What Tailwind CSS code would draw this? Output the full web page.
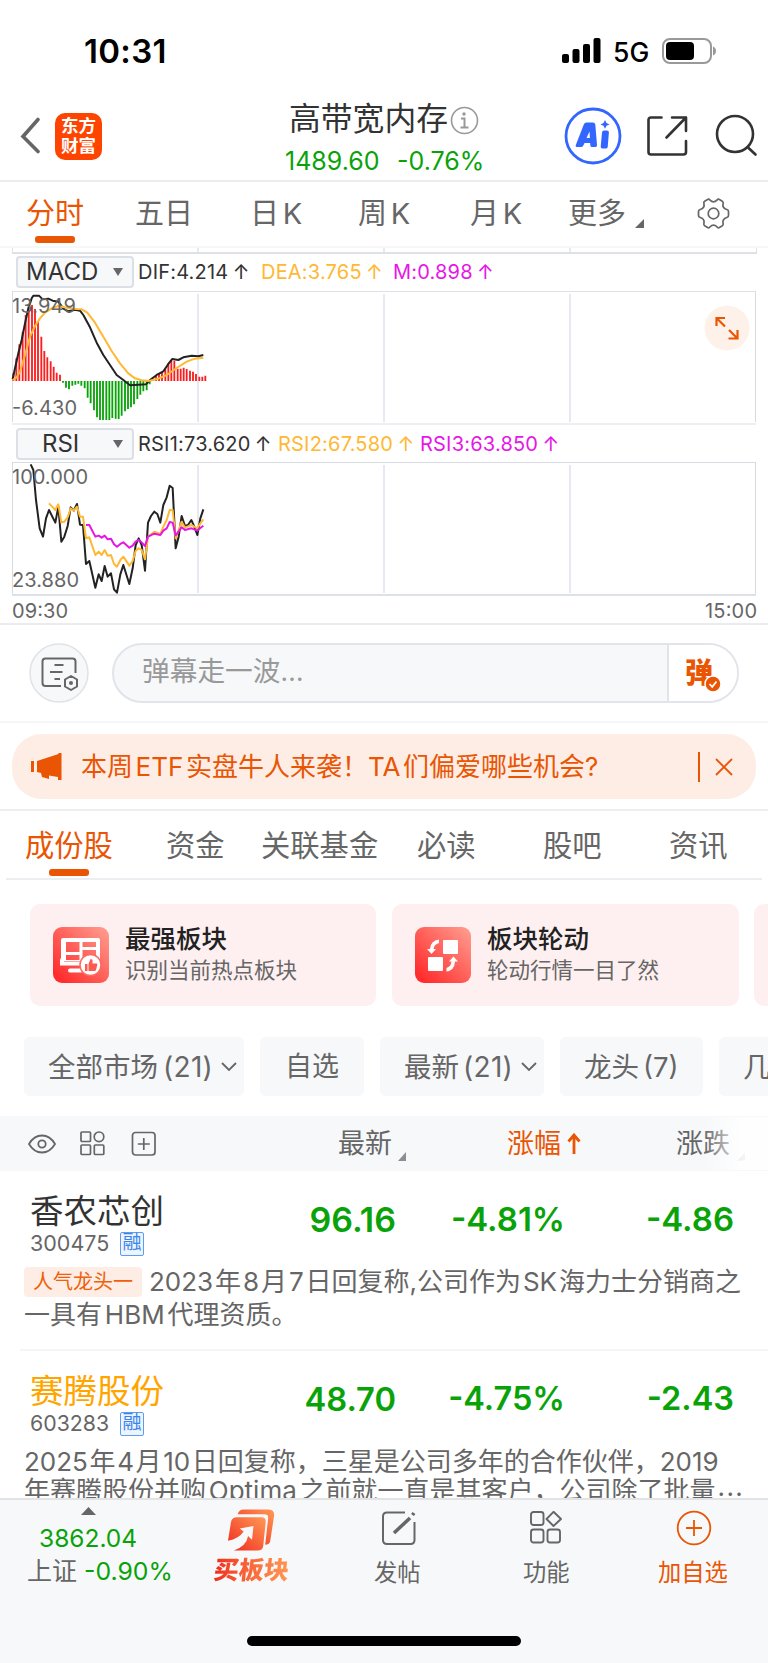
<!DOCTYPE html>
<html lang="zh-CN">
<head>
<meta charset="utf-8">
<title>高带宽内存</title>
<script src="https://cdn.jsdelivr.net/npm/@tailwindcss/browser@4"></script>
</head>
<body class="bg-white">
<div class="w-[768px] h-[1663px] overflow-hidden flex flex-col bg-white text-[#666] leading-none whitespace-nowrap font-[Inter,'Noto_Sans_CJK_SC',sans-serif]">

  <!-- status bar -->
  <div class="h-[102px] shrink-0 flex items-center text-black">
    <div class="ml-[84px] w-[478px] text-[33px] font-semibold tracking-[0.3px]">10:31</div>
    <svg width="39" height="26" viewBox="0 0 39 26"><rect x="0" y="16" width="7" height="9" rx="2"/><rect x="10.5" y="11" width="7" height="14" rx="2"/><rect x="21" y="6" width="7" height="19" rx="2"/><rect x="31.500" y="0" width="7" height="25" rx="2"/></svg>
    <div class="ml-[12px] mt-[2px] w-[49px] text-[26.500px] font-medium">5G</div>
    <svg width="56" height="26" viewBox="0 0 56 26"><rect x="1" y="1" width="48" height="24" rx="7" fill="none" stroke="#999" stroke-width="2"/><rect x="4" y="4" width="28" height="18" rx="4"/><path d="M51 8.500c4 1.500 4 7.500 0 9z" fill="#999"/></svg>
  </div>

  <!-- title bar -->
  <header class="h-[80px] shrink-0 flex items-center pb-[10px] border-b-2 border-[#ececec]">
    <svg class="ml-[19px]" width="22" height="38" viewBox="0 0 22 38"><path d="M19 3L4 20L19 35" transform="translate(0 -.5)" fill="none" stroke="#666" stroke-width="3.600" stroke-linecap="round"/></svg>
    <div class="ml-[14px] size-[47px] rounded-[10px] bg-[#ff4400] text-white text-[17.500px] font-bold leading-[20px] text-center flex flex-col justify-center"><span>东方</span><span>财富</span></div>
    <div class="ml-[183px] mt-[7px] w-[200px] flex flex-col gap-[7px]">
      <div class="h-[36px] ml-[4px] flex items-center text-[31.800px] text-[#333] leading-[36px]">高带宽内存<svg class="ml-[2px] mt-[2px]" width="29" height="29" viewBox="0 0 29 29"><circle cx="14.500" cy="14.500" r="13" fill="none" stroke="#999" stroke-width="1.600"/><circle cx="14" cy="8" r="1.700" fill="#999"/><path d="M11 12.500h3.500v9M10.500 21.500h8" fill="none" stroke="#999" stroke-width="2"/></svg></div>
      <div class="h-[34px] flex items-center text-[25px] text-[#09a309]"><span class="w-[112px]">1489.60</span><span>-0.76%</span></div>
    </div>
    <svg class="ml-[79px]" width="58" height="58" viewBox="0 0 58 58" fill="#3366ff"><circle cx="29" cy="29" r="27" fill="none" stroke="#3366ff" stroke-width="2.800"/><path fill-rule="evenodd" d="M20 17q.8-1.500 2.300-1.500h6.700q2 0 2.300 2l1.700 20.500q.2 2-1.500 2h-3.500q-1.500 0-1.600-1.500l-.3-2.500h-5.500l-1.300 2.500q-.7 1.500-2.200 1.500h-3.800q-2.200 0-1.500-2zM22.500 31h3.400l-.4-6.500z"/><path d="M38 25.500q.2-2 2-2h3q2 0 1.900 2l-1.200 14.500q-.2 1.500-1.800 1.500h-3.500q-1.800 0-1.700-1.800zM41 13l1.500 3 3 1.400-3 1.400L41 21.800l-1.500-3-3-1.400 3-1.400z"/></svg>
    <svg class="ml-[24px]" width="42" height="42" viewBox="0 0 42 42" fill="none" stroke="#333" stroke-width="2.600" stroke-linecap="round" stroke-linejoin="round"><path d="M15.500 2.500H5Q2.500 2.500 2.500 5V37Q2.500 39.500 5 39.500H37.500Q40 39.500 40 37V26M26 2.500H40V16M40 2.500L20.500 22.500"/></svg>
    <svg class="ml-[26px]" width="44" height="44" viewBox="0 0 44 44" fill="none" stroke="#333" stroke-width="2.600" stroke-linecap="round"><circle cx="21" cy="20" r="18"/><path d="M34 33.500L41.500 40.500"/></svg>
  </header>

  <!-- period tabs -->
  <nav class="h-[66px] shrink-0 flex text-[29px] [word-spacing:-4.5px] border-b-2 border-[#f7f7f7]">
    <div class="ml-[26px] w-[109px] flex flex-col text-[#ea5504]"><span class="h-[54px] leading-[63px]">分时</span><span class="ml-[9px] w-[40px] h-[7px] rounded-[3px] bg-[#ea5504]"></span></div>
    <span class="w-[115px] leading-[63px]">五日</span>
    <span class="w-[108px] leading-[63px]">日 K</span>
    <span class="w-[112px] leading-[63px]">周 K</span>
    <span class="w-[98px] leading-[63px]">月 K</span>
    <span class="w-[67px] leading-[63px]">更多</span>
    <svg class="mt-[37px]" width="10" height="10" viewBox="0 0 10 10"><path d="M9 0V9H0z" fill="#666"/></svg>
    <svg class="ml-[52px] mt-[15px]" width="33" height="33" viewBox="-16.500 -16.500 33 33" fill="none" stroke="#666" stroke-width="1.700" stroke-linejoin="round"><circle r="5.300"/><path d="M-5.500 -14.200Q-4.200 -14.600 -3.500 -13.300Q0 -9.800 3.500 -13.300Q4.200 -14.600 5.500 -14.200L8.800 -12.300Q10 -11.500 9.600 -10Q8.500 -5.500 13.300 -4Q15 -3.500 15 -2V2Q15 3.500 13.300 4Q8.500 5.500 9.600 10Q10 11.500 8.800 12.300L5.500 14.200Q4.200 14.600 3.500 13.300Q0 9.800 -3.500 13.300Q-4.200 14.600 -5.500 14.200L-8.800 12.300Q-10 11.500 -9.600 10Q-8.500 5.500 -13.300 4Q-15 3.500 -15 2V-2Q-15 -3.500 -13.300 -4Q-8.500 -5.500 -9.600 -10Q-10 -11.500 -8.800 -12.300Z"/></svg>
  </nav>

  <!-- bottom edge of the scrolled price chart -->
  <div class="mx-[12px] h-[6px] w-[745px] shrink-0 border-b-2 border-x border-[#dfe1e8] flex"><i class="w-[186px] border-r-2 border-[#e6e9f0]"></i><i class="w-[186px] border-r-2 border-[#e6e9f0]"></i><i class="w-[186px] border-r-2 border-[#e6e9f0]"></i></div>

  <!-- MACD -->
  <div class="h-[37px] shrink-0 flex items-center pb-[2px] text-[20px]">
    <div class="ml-[16px] w-[118px] h-[32px] rounded-[4px] border-2 border-[#dcdfe6] bg-[#f7f8fa] flex items-center text-[24px] text-[#333]"><span class="ml-[8px] w-[87px]">MACD</span><svg width="10" height="8" viewBox="0 0 10 8"><path d="M0 0H10L5 8z" fill="#666"/></svg></div>
    <span class="ml-[4px] w-[123px] text-[#333] tracking-[0.2px] [word-spacing:-1.500px]">DIF:4.214 ↑</span>
    <span class="w-[132px] text-[#ffb833] tracking-[0.2px] [word-spacing:-1.500px]">DEA:3.765 ↑</span>
    <span class="text-[#e617e6] tracking-[0.2px] [word-spacing:-1.500px]">M:0.898 ↑</span>
  </div>
  <div class="relative h-[134px] shrink-0">
    <svg class="block" width="768" height="134" viewBox="0 291 768 134">
      <path d="M12 291.500H756" stroke="#dfe1e8" stroke-width="1"/><path d="M12.500 291V422M755.500 291V422" stroke="#d8dbe2"/><path d="M198 294V422M384 294V422M570 294V422" stroke="#e6e9f2" stroke-width="2"/><path d="M12 424H756" stroke="#eeeff2" stroke-width="2"/>
      <g transform="translate(0 240) scale(.33333)" fill="none">
        <path stroke="#fa1e1e" stroke-width="5.500" d="M40 423V400M49 423V355M58 423V313M68 423V275M77 423V225M86 423V205M96 423V195M105 423V207M114 423V245M124 423V290M133 423V333M142 423V352M152 423V364M161 423V380M170 423V398M180 423V404M458 423V415M468 423V405M477 423V400M486 423V396M496 423V388M505 423V370M514 423V362M523 423V362M533 423V386M542 423V386M551 423V383M560 423V387M570 423V392M579 423V395M588 423V402M598 423V410M607 423V410M616 423V407"/>
        <path stroke="#09a309" stroke-width="5.500" d="M189 423V428M198 423V443M207 423V448M217 423V437M226 423V434M235 423V431M244 423V437M254 423V445M263 423V473M272 423V490M282 423V511M291 423V532M300 423V540M309 423V540M319 423V540M328 423V540M337 423V534M347 423V536M356 423V537M365 423V527M375 423V514M384 423V507M393 423V502M402 423V493M412 423V477M421 423V464M430 423V454M440 423V451M449 423V433"/>
        <path stroke="#222" stroke-width="6" stroke-linejoin="round" d="M38 418L45 385L55 340L65 300L75 250L85 205L95 175L100 167L117 167L128 178L145 176L158 182L175 185L190 206L205 214L225 209L240 212L250 225L270 262L290 308L310 345L330 375L350 405L370 420L390 436L415 434L438 433L450 420L470 405L490 394L505 372L517 357L535 360L550 352L575 347L595 349L610 345"/>
        <path stroke="#ffb833" stroke-width="6" stroke-linejoin="round" d="M38 420L50 412L60 395L75 345L90 290L105 258L120 235L135 218L155 205L175 198L200 203L230 207L245 208L262 218L285 248L310 290L335 333L360 370L385 400L405 415L425 421L445 423L475 416L500 405L530 384L560 365L585 356L610 353"/>
      </g>
      <g font-size="20" fill="#666"><text x="12" y="312.500" textLength="64">13.949</text><text x="12" y="415" textLength="65">-6.430</text></g>
    </svg>
    <svg class="absolute left-[704px] top-[14px]" width="46" height="46" viewBox="0 0 46 46"><circle cx="23" cy="23" r="22.500" fill="#fef1ea"/><path d="M12.500 21V13H21M13 13.500L21 21.500M33.500 25V33.500H24.500M33 33L25 25" fill="none" stroke="#ea5504" stroke-width="2.200"/></svg>
  </div>

  <!-- RSI -->
  <div class="h-[37px] shrink-0 flex items-center text-[20px]">
    <div class="ml-[16px] w-[118px] h-[32px] rounded-[4px] border-2 border-[#dcdfe6] bg-[#f7f8fa] flex items-center text-[24px] text-[#333]"><span class="ml-[24px] w-[71px]">RSI</span><svg width="10" height="8" viewBox="0 0 10 8"><path d="M0 0H10L5 8z" fill="#666"/></svg></div>
    <span class="ml-[4px] w-[140px] text-[#333] tracking-[0.2px] [word-spacing:-1.500px]">RSI1:73.620 ↑</span>
    <span class="w-[142px] text-[#ffb833] tracking-[0.2px] [word-spacing:-1.500px]">RSI2:67.580 ↑</span>
    <span class="text-[#e617e6] tracking-[0.2px] [word-spacing:-1.500px]">RSI3:63.850 ↑</span>
  </div>
  <svg class="block shrink-0" width="768" height="161" viewBox="0 462 768 161">
    <path d="M12 462.500H756" stroke="#d8dbe2" stroke-width="1"/><path d="M12.500 462V594M755.500 462V594" stroke="#d8dbe2"/><path d="M198 465V593M384 465V593M570 465V593" stroke="#e6e9f2" stroke-width="2"/><path d="M12 595H756" stroke="#dfe1e8" stroke-width="2"/>
    <g transform="translate(0 420) scale(.33333)" fill="none" stroke-width="6" stroke-linejoin="round">
      <path stroke="#222" d="M92 133L100 150L108 240L119 325L129 350L138 295L147 270L166 308L175 260L184 365L193 350L203 318L212 262L221 272L231 252L240 314L249 315L258 432L268 423L286 503L296 463L305 483L314 438L323 470L333 460L342 508L351 518L361 463L370 435L388 492L398 445L407 375L416 355L425 375L435 452L444 308L453 288L463 275L472 282L481 308L490 255L500 232L509 197L518 204L527 385L536 350L545 288L555 318L564 315L574 300L583 320L592 345L601 295L610 268"/>
      <path stroke="#ffb833" d="M147 250L166 270L175 253L184 307L193 305L203 292L212 265L221 272L231 260L240 290L249 290L258 355L268 352L286 405L296 395L305 405L314 390L323 407L333 405L342 432L351 440L361 420L370 410L388 437L398 423L407 392L416 385L425 390L435 418L444 350L463 335L481 342L490 320L500 300L509 270L518 270L527 355L545 305L555 323L574 315L592 325L601 310L610 298"/>
      <path stroke="#e617e6" d="M258 315L268 315L286 350L296 347L305 353L314 347L323 358L333 356L342 373L351 380L361 372L370 367L388 383L398 377L407 365L416 360L425 367L435 378L444 350L463 341L481 345L490 332L500 325L509 306L518 308L527 346L545 322L555 330L574 325L592 332L601 324L610 317"/>
    </g>
    <g font-size="20" fill="#666"><text x="12" y="484" textLength="76">100.000</text><text x="12" y="586.500" textLength="67">23.880</text><text x="12" y="617.500" textLength="56">09:30</text><text x="705" y="617.500" textLength="52">15:00</text></g>
  </svg>

  <!-- comment input -->
  <div class="h-[100px] shrink-0 flex items-center border-y-2 border-[#eaecef] border-b-[#f6f6f6]">
    <svg class="ml-[29px]" width="60" height="60" viewBox="0 0 60 60" fill="none" stroke="#666" stroke-width="2"><circle cx="30" cy="30" r="29" fill="#f7f8fa" stroke="#dfe2e8" stroke-width="1.500"/><path d="M32 43H16.500Q13.500 43 13.500 40V18.500Q13.500 15.500 16.500 15.500H43.500Q46.500 15.500 46.500 18.500V30M25.500 22H34.500M21 29H33.500M25.500 36H31"/><path d="M42 33L48 36.500V43.500L42 47L36 43.500V36.500Z" stroke-linejoin="round"/><circle cx="42" cy="40" r="2" fill="#666" stroke="none"/></svg>
    <div class="ml-[23px] w-[627px] h-[60px] rounded-full border-2 border-[#e1e4ea] bg-[#f7f8fa] overflow-hidden flex">
      <div class="w-[553px] pl-[28px] leading-[52px] text-[27.700px] text-[#999]">弹幕走一波<span class="text-[26px] tracking-[0.300px]">...</span></div>
      <div class="flex-1 bg-white border-l-2 border-[#e1e4ea] flex items-center">
        <span class="ml-[16px] text-[28px] font-black text-[#ea5504]">弹</span>
        <svg class="-ml-[9px] mt-[22px]" width="18" height="18" viewBox="0 0 18 18"><circle cx="9" cy="9" r="8" fill="#ea5504" stroke="#fff" stroke-width="1.500"/><path d="M5.500 9L8.200 11.800L12.500 6.500" fill="none" stroke="#fff" stroke-width="1.800"/></svg>
      </div>
    </div>
  </div>

  <!-- announcement -->
  <div class="h-[88px] shrink-0 px-[12px] pt-[11px] border-b-2 border-[#eceef2]">
    <div class="w-[744px] h-[65px] rounded-[30px] bg-[#fdede5] flex items-center text-[#ea5504]">
      <svg class="ml-[19px]" width="31" height="27" viewBox="0 0 31 27" fill="#ea5504"><path d="M0 8h3v11H0zM6 8L27.500 1V0H30.500V27H27V24L18 22.500V26L11 24L10 20L6 19z"/></svg>
      <div class="ml-[19px] w-[617px] text-[26px] [word-spacing:-4.700px]">本周 ETF 实盘牛人来袭！TA 们偏爱哪些机会?</div>
      <i class="w-[1.500px] h-[30px] bg-[#ea5504]"></i>
      <svg class="ml-[15px]" width="18" height="18" viewBox="0 0 18 18"><path d="M1 1L17 17M17 1L1 17" stroke="#ea5504" stroke-width="1.800"/></svg>
    </div>
  </div>

  <!-- section tabs -->
  <nav class="mx-[6px] h-[69px] shrink-0 flex text-[29.300px] leading-[70px] border-b-2 border-[#eceef2]">
    <div class="ml-[19px] w-[141px] flex flex-col text-[#ea5504]"><span class="h-[58px]">成份股</span><span class="ml-[24px] w-[40px] h-[7px] rounded-[3px] bg-[#ea5504]"></span></div>
    <span class="w-[95px]">资金</span><span class="w-[156px]">关联基金</span><span class="w-[126px]">必读</span><span class="w-[126px]">股吧</span><span>资讯</span>
  </nav>

  <!-- feature cards -->
  <div class="h-[157px] shrink-0 pl-[30px] pt-[24px] flex gap-[16px]">
    <div class="w-[346px] h-[102px] shrink-0 rounded-[10px] bg-[#fef0f0] flex items-center pl-[23px] gap-[16px]">
      <svg width="56" height="56" viewBox="0 0 56 56"><defs><linearGradient id="r" x1="0" y1="1" x2="1" y2="0"><stop offset="0.100" stop-color="#ff2d2d"/><stop offset="1" stop-color="#ffa092"/></linearGradient></defs><rect width="56" height="56" rx="9" fill="url(#r)"/><path fill="#fff" fill-rule="evenodd" d="M10 11H45Q47 11 47 13V34H10Q8 34 8 36V13Q8 11 10 11ZM13 15V25H26.500V15ZM29.500 15V20H43V15ZM29.500 23V32H43V23ZM13 28V33H26.500V28Z"/><path d="M9 33V36.500H30M17 43.500H28" stroke="#fff" stroke-width="4" stroke-linecap="round" fill="none"/><circle cx="37.500" cy="38" r="10.500" fill="#fff" stroke="#ff6a60" stroke-width="1.500"/><path fill="#ff5a50" d="M32 37h2.500v7H32zM35.500 37l2-5q2.500 0 2 3v1.500h4q1 0 .8 1.200L43 43q-.3 1-1.300 1h-6.200z"/></svg>
      <div class="flex flex-col -mt-[3px]"><span class="text-[25.500px] leading-[33px] font-medium text-[#222]">最强板块</span><span class="text-[21.500px] leading-[30px]">识别当前热点板块</span></div>
    </div>
    <div class="w-[347px] h-[102px] shrink-0 rounded-[10px] bg-[#fef0f0] flex items-center pl-[23px] gap-[16px]">
      <svg width="56" height="56" viewBox="0 0 56 56" fill="#fff"><rect width="56" height="56" rx="9" fill="url(#r)"/><rect x="28" y="13" width="15" height="14" rx="1"/><rect x="13" y="30" width="15" height="14" rx="1"/><path d="M24 12.500v3.500q-5 1.500-5.500 6h2.500l-4.500 5L12 22h3q.5-8.500 9-9.500zM31.500 44.500v-3.500q4.500-1.500 5-6.500h-2.500l4.500-5 4.500 5h-3q-.5 9-8.500 10z"/></svg>
      <div class="flex flex-col -mt-[3px]"><span class="text-[25.500px] leading-[33px] font-medium text-[#222]">板块轮动</span><span class="text-[21.500px] leading-[30px]">轮动行情一目了然</span></div>
    </div>
    <div class="w-[346px] h-[102px] shrink-0 -ml-[1px] rounded-[10px] bg-[#fef0f0]"></div>
  </div>

  <!-- filter chips -->
  <div class="h-[79px] shrink-0 pl-[24px] flex gap-[16px] text-[27.500px] leading-[60px]">
    <div class="w-[220px] h-[59px] shrink-0 rounded-[6px] bg-[#f7f8fa] pl-[24px] flex items-center"><span class="w-[173px]">全部市场<span class="ml-[5px] text-[28px] tracking-[0.300px]">(21)</span></span><svg width="16" height="10" viewBox="0 0 16 10"><path d="M1 1L8 8L15 1" fill="none" stroke="#666" stroke-width="1.800"/></svg></div>
    <div class="w-[104px] h-[59px] shrink-0 rounded-[6px] bg-[#f7f8fa] pl-[25px] text-[27px]">自选</div>
    <div class="w-[164px] h-[59px] shrink-0 rounded-[6px] bg-[#f7f8fa] pl-[24px] flex items-center"><span class="w-[117px]">最新<span class="ml-[4px] text-[28px] tracking-[0.300px]">(21)</span></span><svg width="16" height="10" viewBox="0 0 16 10"><path d="M1 1L8 8L15 1" fill="none" stroke="#666" stroke-width="1.800"/></svg></div>
    <div class="w-[143px] h-[59px] shrink-0 rounded-[6px] bg-[#f7f8fa] pl-[24px]">龙头<span class="ml-[4px] text-[27.500px]">(7)</span></div>
    <div class="w-[120px] h-[59px] shrink-0 rounded-[6px] bg-[#f7f8fa] pl-[24px]">几</div>
  </div>

  <!-- table head -->
  <div class="relative h-[55px] shrink-0 flex items-center bg-[#f7f8fa] text-[27px]">
    <svg class="ml-[28px]" width="28" height="20" viewBox="0 0 28 20" fill="none" stroke="#666" stroke-width="1.800"><path d="M1 10Q6 1.500 14 1.500T27 10Q22 18.500 14 18.500T1 10Z"/><circle cx="14" cy="10" r="3.700"/></svg>
    <svg class="ml-[24px]" width="25" height="25" viewBox="0 0 25 25" fill="none" stroke="#666" stroke-width="1.700"><rect x="1" y="1" width="9.500" height="9.500" rx="1"/><circle cx="19" cy="5.800" r="4.800"/><rect x="1" y="14" width="9.500" height="9.500" rx="1"/><rect x="14.300" y="14" width="9.500" height="9.500" rx="1"/></svg>
    <svg class="ml-[26px]" width="26" height="26" viewBox="0 0 26 26" fill="none" stroke="#666" stroke-width="1.700"><rect x="1.500" y="1.500" width="22.500" height="22.500" rx="3"/><path d="M12.800 7V19M6.800 13H18.800"/></svg>
    <span class="ml-[181px] w-[60px]">最新</span><svg class="mt-[26px]" width="8" height="9" viewBox="0 0 8 9"><path d="M8 0V9H0z" fill="#8a8d93"/></svg>
    <span class="ml-[101px] w-[60px] text-[#ea5504]">涨幅</span><svg width="14" height="22" viewBox="0 0 14 22"><path d="M7 21V3M1.500 8.500L7 2L12.500 8.500" fill="none" stroke="#ea5504" stroke-width="2.800"/></svg>
    <span class="ml-[95px] w-[62px]">涨跌</span><svg class="mt-[26px]" width="7" height="9" viewBox="0 0 8 9"><path d="M8 0V9H0z" fill="#8a8d93"/></svg>
    <div class="absolute right-0 top-[1px] h-[53px] w-[64px] bg-linear-to-r from-white/0 to-white/90 to-60%"></div>
  </div>

  <!-- stock rows: the list runs under the bottom bar -->
  <div class="h-[327px] shrink-0 overflow-hidden">
    <div class="h-[180px] ml-[20px] border-b-2 border-[#f5f5f5]">
      <div class="h-[92px] flex items-center">
        <div class="ml-[10px] w-[250px] flex flex-col pt-[12px]"><span class="text-[33.500px] leading-[42px] text-[#333]">香农芯创</span><span class="flex items-center h-[24px] text-[21.500px]"><span class="w-[90px]">300475</span><span class="size-[24px] border-[1.500px] border-[#5c9df0] rounded-[2px] bg-[#edf4fe] text-[#3a85e8] text-[19px] leading-[20px] text-center">融</span></span></div>
        <div class="pt-[5px] w-[116px] text-right text-[34px] font-semibold text-[#09a309]">96.16</div><div class="pt-[5px] w-[169px] text-right text-[33px] font-semibold text-[#09a309]">-4.81%</div><div class="pt-[5px] w-[169px] text-right text-[33px] font-semibold text-[#09a309]">-4.86</div>
      </div>
      <div class="ml-[4px] h-[38px] flex items-center text-[26px]"><span class="w-[118px] h-[30px] shrink-0 rounded-[4px] bg-[#fdede5] text-[#f0600a] text-[20px] leading-[30px] text-center">人气龙头一</span><span class="ml-[7px] [word-spacing:-5.400px]">2023 年 8 月 7 日回复称,公司作为 SK 海力士分销商之</span></div>
      <div class="ml-[4px] h-[27px] flex items-center text-[26px] [word-spacing:-4.500px]">一具有 HBM 代理资质。</div>
    </div>
    <div class="ml-[20px]">
      <div class="h-[92px] flex items-center">
        <div class="ml-[10px] w-[250px] flex flex-col pt-[12px]"><span class="text-[33.500px] leading-[42px] text-[#ffa500]">赛腾股份</span><span class="flex items-center h-[24px] text-[21.300px]"><span class="w-[90px]">603283</span><span class="size-[24px] border-[1.500px] border-[#5c9df0] rounded-[2px] bg-[#edf4fe] text-[#3a85e8] text-[19px] leading-[20px] text-center">融</span></span></div>
        <div class="pt-[5px] w-[116px] text-right text-[32.700px] font-semibold text-[#09a309]">48.70</div><div class="pt-[5px] w-[169px] text-right text-[32.500px] font-semibold text-[#09a309]">-4.75%</div><div class="pt-[5px] w-[169px] text-right text-[32.500px] font-semibold text-[#09a309]">-2.43</div>
      </div>
      <div class="ml-[4px] h-[37px] flex items-center text-[26px] [word-spacing:-5.700px]">2025 年 4 月 10 日回复称，三星是公司多年的合作伙伴，2019</div>
      <div class="ml-[4px] h-[21px] flex items-center text-[26px] [word-spacing:-4.500px]">年赛腾股份并购 Optima 之前就一直是其客户，公司除了批量<span class="-mt-[7px] ml-[2px] tracking-[1.300px]">...</span></div>
    </div>
  </div>

  <!-- bottom bar -->
  <footer class="h-[166px] shrink-0 bg-[#f7f8fa] border-t-2 border-[#e3e3e5] flex flex-col text-[23.300px]">
    <div class="h-[136px] flex">
      <div class="w-[200px] flex flex-col">
        <svg class="ml-[81px] mt-[7px]" width="15" height="8" viewBox="0 0 15 8"><path d="M7.500 0L15 8H0z" fill="#666"/></svg>
        <span class="ml-[39px] mt-[9px] h-[28px] leading-[28px] text-[24.500px] text-[#09a309]">3862.04</span>
        <span class="ml-[27px] mt-[1px] h-[36px] flex items-center text-[25px]">上证<span class="ml-[7px] text-[24.800px] text-[#09a309]">-0.90%</span></span>
      </div>
      <div class="w-[120px] ml-[13px] flex flex-col">
        <svg class="ml-[15px] mt-[9px]" width="47" height="43" viewBox="0 0 48 43"><defs><linearGradient id="o" x1="0" y1="1" x2="1" y2="0"><stop offset="0" stop-color="#f0281e"/><stop offset="1" stop-color="#ff9a55"/></linearGradient></defs><path d="M10 5Q11 0 16 0H41Q48 0 47 7L43 33Q42 36 38 36L41 9Q41.500 5 37 5Z" fill="url(#o)"/><path fill="url(#o)" d="M3 13Q4 8 9 8H34Q39 8 38.500 13L36 37Q35.500 42 30 42H6Q19 37 20.500 27L24.500 31L26 17L12 19.500L16 22.500Q11 30 0 32Z"/></svg>
        <span class="ml-[1px] mt-[3px] w-[78px] h-[30px] leading-[30px] text-[25px] font-black -skew-x-6 bg-linear-to-r from-[#f0281e] to-[#ff9a55] bg-clip-text text-transparent">买板块</span>
      </div>
      <div class="ml-[41px] w-[149px] flex flex-col">
        <svg class="ml-[7px] mt-[10px]" width="36" height="37" viewBox="0 0 36 37" fill="none" stroke="#666" stroke-width="2"><path d="M24 2.500H6Q2 2.500 2 6.500V30Q2 34 6 34H29.500Q33.500 34 33.500 30V12"/><path d="M33 3L31.500 5M29 8L13 23" stroke-width="3.500"/></svg>
        <span class="mt-[9px] h-[34px] leading-[34px]">发帖</span>
      </div>
      <div class="w-[135px] flex flex-col">
        <svg class="ml-[7px] mt-[11px]" width="34" height="34" viewBox="0 0 34 34" fill="none" stroke="#666" stroke-width="1.900"><rect x="1" y="1" width="12.500" height="13" rx="2.500"/><path d="M23.500 .8L31 8L23.500 15L16.500 8Z" stroke-linejoin="round"/><rect x="1" y="18.500" width="12.500" height="13" rx="2.500"/><rect x="17.500" y="18.500" width="12.500" height="13" rx="2.500"/></svg>
        <span class="mt-[11px] h-[34px] leading-[34px]">功能</span>
      </div>
      <div class="flex flex-col text-[#ea5504]">
        <svg class="ml-[18px] mt-[10px]" width="36" height="36" viewBox="0 0 36 36" fill="none" stroke="#ea5504" stroke-width="1.800"><circle cx="18" cy="18" r="16.300"/><path d="M18 10V26M10 18H26"/></svg>
        <span class="mt-[10px] h-[34px] leading-[34px]">加自选</span>
      </div>
    </div>
    <div class="mx-auto w-[274px] h-[10px] rounded-full bg-black"></div>
  </footer>
</div>
</body>
</html>
